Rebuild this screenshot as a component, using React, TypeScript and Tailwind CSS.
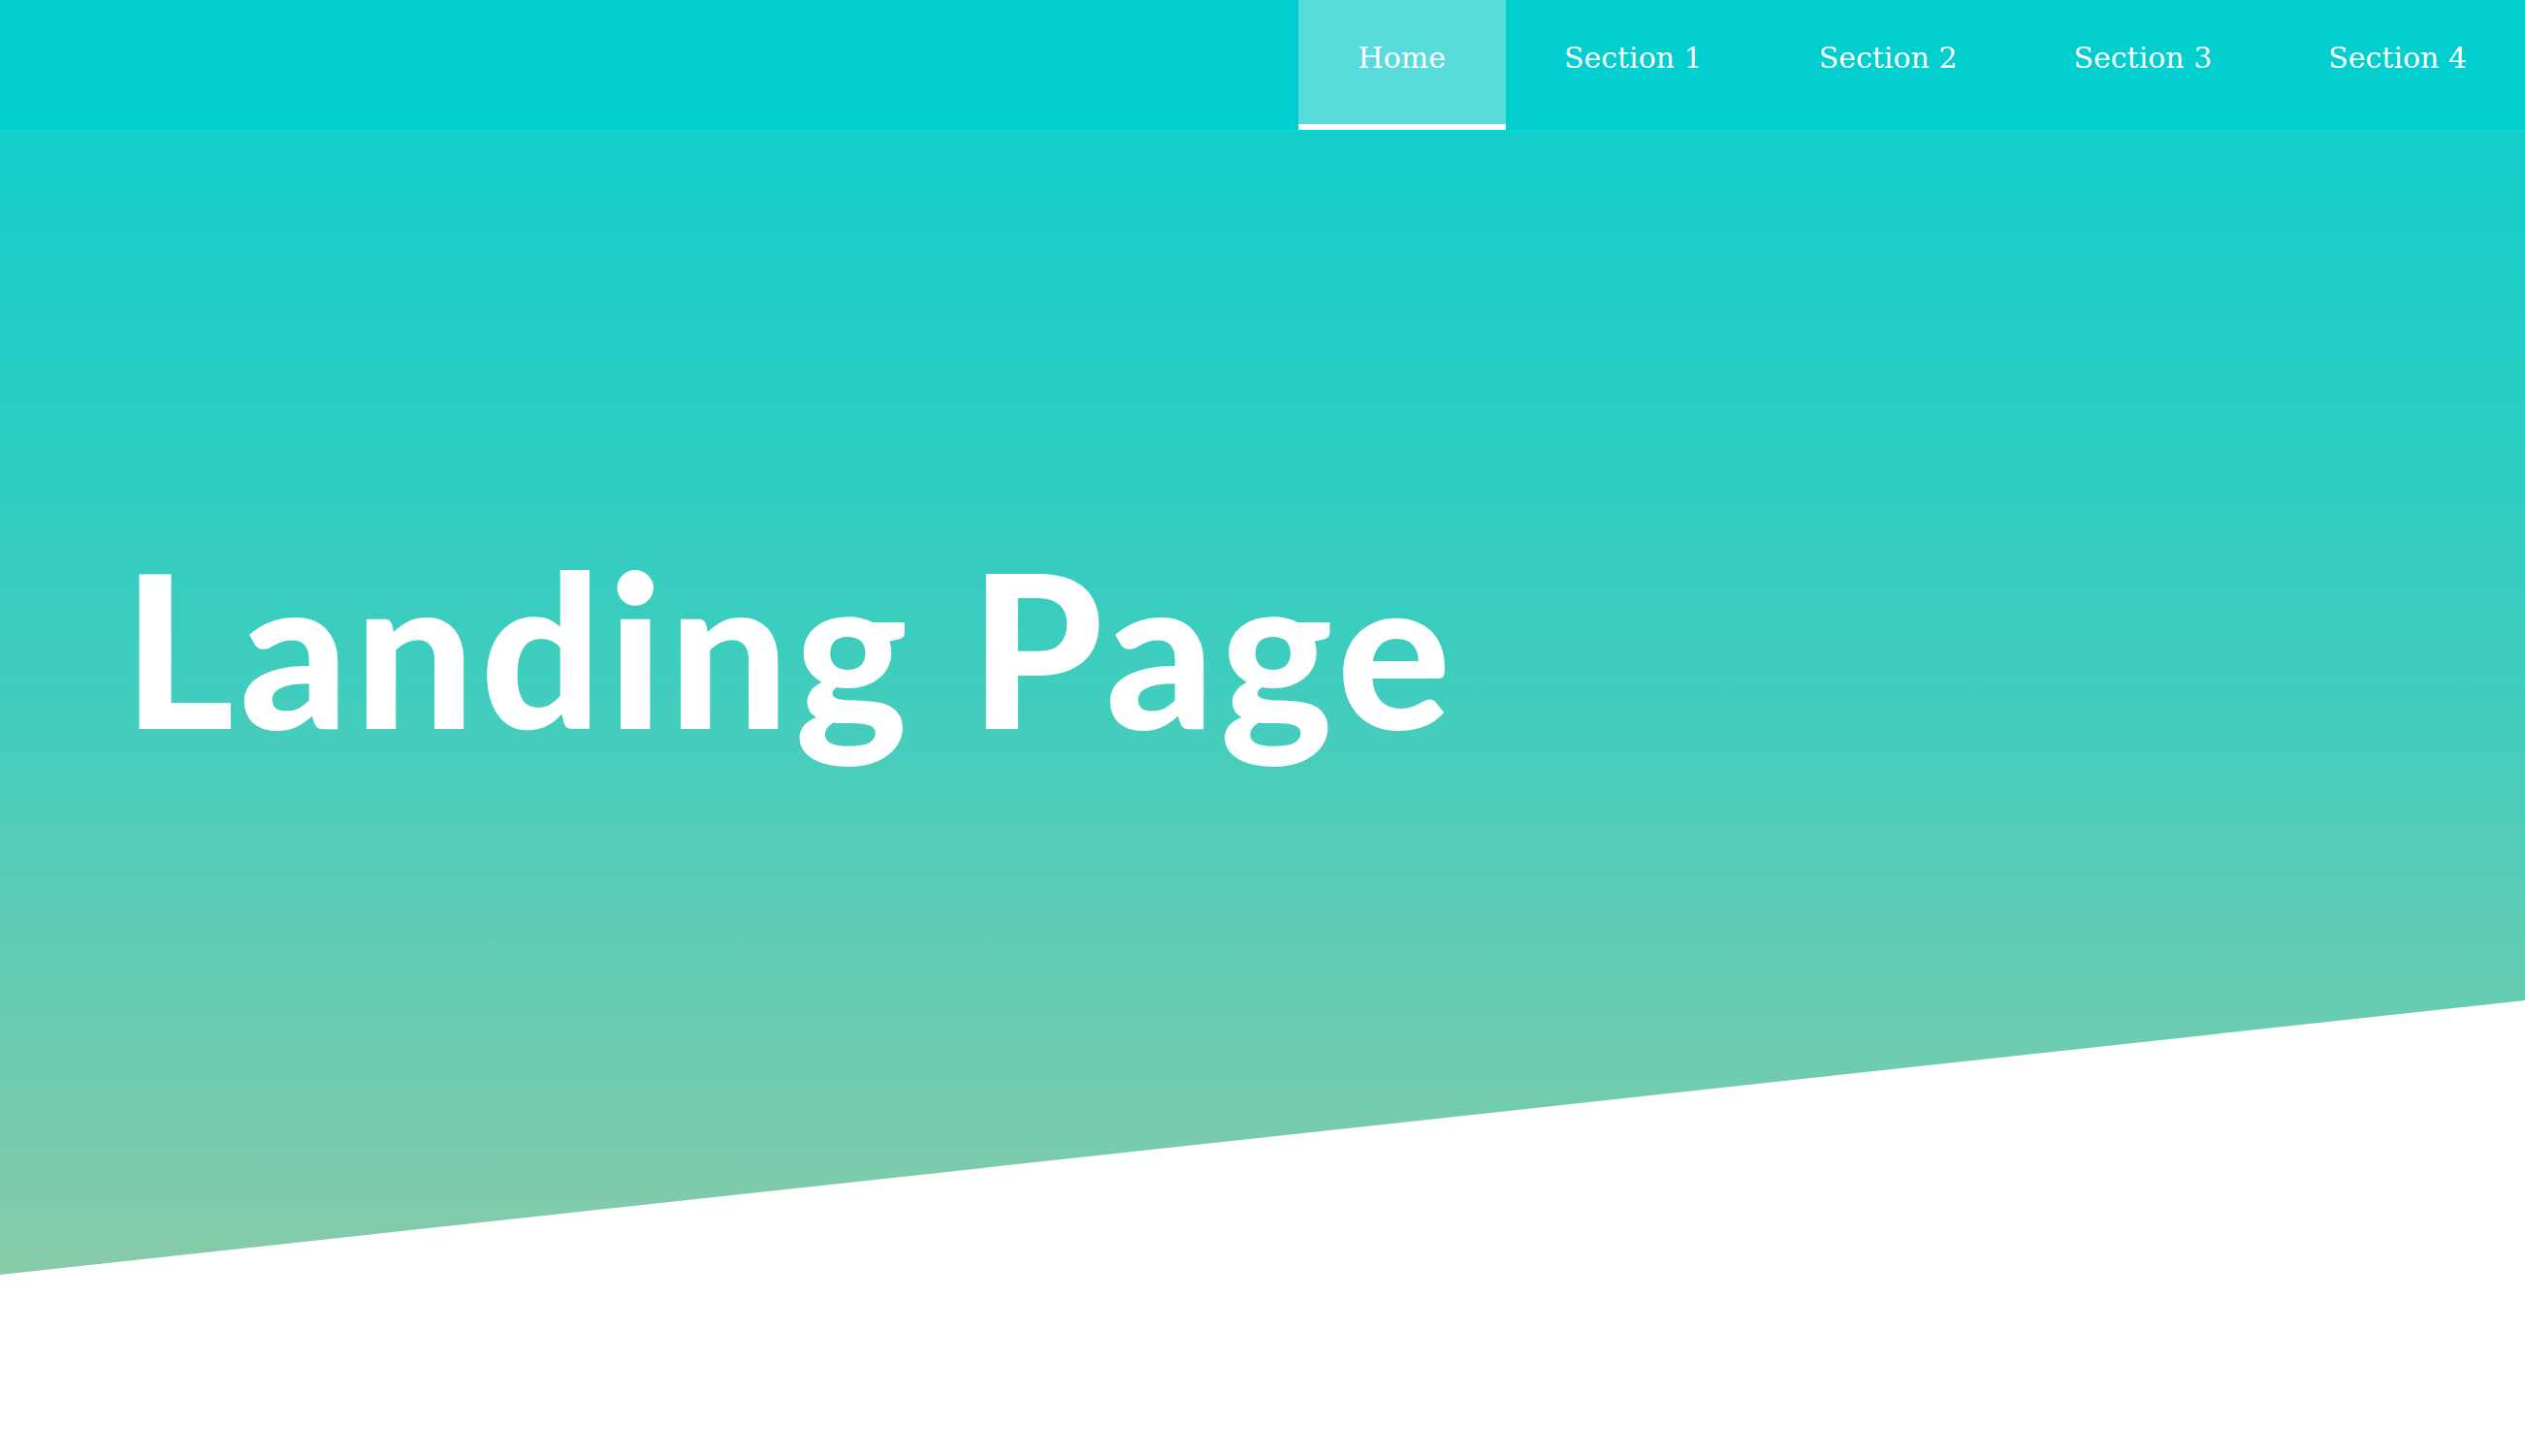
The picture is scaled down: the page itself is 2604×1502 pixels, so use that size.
import React from 'react';

const NAV_MENU = [
    { name: "Home", active: true },
    { name: "Section 1" },
    { name: "Section 2" },
    { name: "Section 3" },
    { name: "Section 4" },
];

function NavItem({ name, active }: { name: string; active?: boolean }) {
    return (
        <li
            className={
                active
                    ? "h-full px-[62px] pt-[45px] bg-[#58dcdb] border-b-[6px] border-white"
                    : "h-full px-[60px] pt-[45px]"
            }
        >
            <a href="#" className="block text-[30px] leading-none text-white whitespace-nowrap">
                {name}
            </a>
        </li>
    );
}

export default function App() {
    return (
        <div className="min-h-screen bg-white font-['DejaVu_Serif',serif]">
            <nav className="h-[136px] bg-[#00cecf] border-b-2 border-[#00dbd8] flex justify-end">
                <ul className="flex h-full">
                    {NAV_MENU.map(({ name, active }) => (
                        <NavItem key={name} name={name} active={active} />
                    ))}
                </ul>
            </nav>

            <header className="h-[1179px] bg-[linear-gradient(180deg,#12cdc9_0%,#3fcdbe_48%,#88cba9_100%)] [clip-path:polygon(0_0,100%_0,100%_76%,0_100%)]">
                <div className="pt-[422px] pl-[127px]">
                    <h1 className="font-['Lato',sans-serif] font-black text-[219px] leading-none tracking-[6px] text-white whitespace-nowrap">
                        Landing Page
                    </h1>
                </div>
            </header>
        </div>
    );
}
